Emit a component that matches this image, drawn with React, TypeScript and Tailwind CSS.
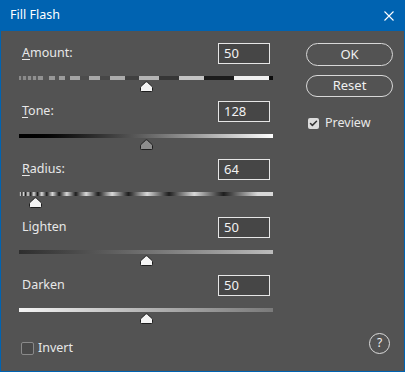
import { Check } from 'lucide-react'

const FONT = "font-['Noto_Sans','Liberation_Sans',sans-serif]"

// grey blocks of the Amount track, [width, colour]
const amountBlocks: [number, string][] = [
  [2, '#8a8a8a'], [2, '#5a5a5a'], [3, '#8a8a8a'], [2, '#5a5a5a'], [3, '#8e8e8e'], [2, '#5c5c5c'], [3, '#909090'], [2, '#5c5c5c'],
  [5, '#929292'], [6, '#555555'], [6, '#989898'], [4, '#555555'], [6, '#9c9c9c'], [5, '#4f4f4f'],
  [10, '#a4a4a4'], [9, '#4c4c4c'], [11, '#a8a8a8'], [10, '#474747'], [15, '#acacac'], [15, '#404040'],
  [20, '#b4b4b4'], [20, '#363636'], [25, '#c4c4c4'], [30, '#1c1c1c'], [35, '#f0f0f0'], [4, '#0c0c0c'],
]

function Thumb({ left, grey }: { left: number; grey?: boolean }) {
  return (
    <svg
      width="13"
      height="11"
      viewBox="0 0 13 11"
      className="absolute top-[5px]"
      style={{ left: left - 6.5 }}
    >
      <path
        d="M6.5 0.8 Q7 0.8 7.6 1.4 L12.2 5.6 Q12.5 5.9 12.5 6.4 L12.5 9.7 Q12.5 10.5 11.7 10.5 L1.3 10.5 Q0.5 10.5 0.5 9.7 L0.5 6.4 Q0.5 5.9 0.8 5.6 L5.4 1.4 Q6 0.8 6.5 0.8 Z"
        fill={grey ? '#8c8c8c' : '#f4f4f4'}
        stroke="#1e1e1e"
        strokeWidth="1"
      />
    </svg>
  )
}

function RadiusTrack() {
  const stops: { o: number; c: string }[] = []
  let x = 0
  let step = 1.3
  let dark = true
  while (x < 254) {
    stops.push({ o: x / 254, c: dark ? '#1e1e1e' : '#d8d8d8' })
    x += step
    step *= 1.16
    dark = !dark
  }
  return (
    <svg width="254" height="4" className="block">
      <defs>
        <linearGradient id="rad" x1="0" x2="1" y1="0" y2="0">
          {stops.map((s, i) => (
            <stop key={i} offset={s.o} stopColor={s.c} />
          ))}
        </linearGradient>
      </defs>
      <rect width="254" height="4" fill="url(#rad)" />
    </svg>
  )
}

function SliderRow({
  label,
  mnemonic,
  value,
  thumb,
  grey,
  children,
}: {
  label: string
  mnemonic?: boolean
  value: string
  thumb: number
  grey?: boolean
  children: React.ReactNode
}) {
  return (
    <div className="flex flex-col h-[58px]">
      <div className="flex items-center justify-between h-[21px] pl-[3px] pr-[3px]">
        <span className="text-[12.5px] text-[#e8e8e8]">
          {mnemonic ? (
            <>
              <span className="underline underline-offset-2">{label[0]}</span>
              {label.slice(1)}
            </>
          ) : (
            label
          )}
        </span>
        <div className="w-[52px] h-[21px] border border-[#e6e6e6] bg-[#464646] text-[13px] text-[#f2f2f2] pl-[5px] leading-[19px]">
          {value}
        </div>
      </div>
      <div className="relative mt-[12px] h-[4px]">
        {children}
        <Thumb left={thumb} grey={grey} />
      </div>
    </div>
  )
}

export default function App() {
  return (
    <div className={`w-[405px] h-[372px] bg-[#0063b1] flex flex-col ${FONT}`}>
      <div className="h-[31px] flex items-center justify-between pl-[10px] pr-[11px] shrink-0">
        <span className="text-[12.5px] text-white">Fill Flash</span>
        <svg width="10" height="10" viewBox="0 0 10 10">
          <path d="M0.5 0.5 L9.5 9.5 M9.5 0.5 L0.5 9.5" stroke="#ffffff" strokeWidth="1.1" />
        </svg>
      </div>
      <div className="flex-1 mx-[1px] mb-[1px] bg-[#535353] relative">
        <div className="flex">
          <div className="w-[254px] ml-[18px] pt-[12px]">
            <SliderRow label="Amount:" mnemonic value="50" thumb={127}>
              <div className="flex h-[4px]">
                {amountBlocks.map(([w, c], i) => (
                  <div key={i} style={{ width: w, background: c }} />
                ))}
              </div>
            </SliderRow>
            <SliderRow label="Tone:" mnemonic value="128" thumb={127} grey>
              <div className="h-[4px] bg-gradient-to-r from-black to-white" />
            </SliderRow>
            <SliderRow label="Radius:" mnemonic value="64" thumb={16}>
              <RadiusTrack />
            </SliderRow>
            <SliderRow label="Lighten" value="50" thumb={127}>
              <div className="h-[4px] bg-gradient-to-r from-[#2e2e2e] to-[#bcbcbc]" />
            </SliderRow>
            <SliderRow label="Darken" value="50" thumb={127}>
              <div className="h-[4px] bg-gradient-to-r from-[#f4f4f4] to-[#7a7a7a]" />
            </SliderRow>
          </div>
          <div className="ml-[33px] pt-[12px] flex flex-col">
            <button className="w-[87px] h-[23px] rounded-full border border-[#d8d8d8] text-[13px] text-[#f0f0f0]">
              OK
            </button>
            <button className="mt-[9px] w-[87px] h-[22px] rounded-full border border-[#d8d8d8] text-[13px] text-[#f0f0f0]">
              Reset
            </button>
            <label className="mt-[17px] ml-[2px] flex items-center gap-[6px] text-[12.5px] text-[#e8e8e8]">
              <span className="w-[11px] h-[11px] rounded-[2px] bg-[#dcdcdc] flex items-center justify-center">
                <Check className="w-[9px] h-[9px] text-[#333]" strokeWidth={4} />
              </span>
              Preview
            </label>
          </div>
        </div>
        <div className="flex items-center justify-between pl-[20px] pr-[14px] mt-[-4px]">
          <label className="flex items-center gap-[4px] text-[12.5px] text-[#e8e8e8] mt-[10px]">
            <span className="w-[13px] h-[13px] rounded-[2px] border border-[#8a8a8a] bg-[#4a4a4a]" />
            Invert
          </label>
          <div className="w-[21px] h-[21px] rounded-full border border-[#dcdcdc] flex items-center justify-center text-[12px] text-[#f0f0f0]">
            ?
          </div>
        </div>
      </div>
    </div>
  )
}
